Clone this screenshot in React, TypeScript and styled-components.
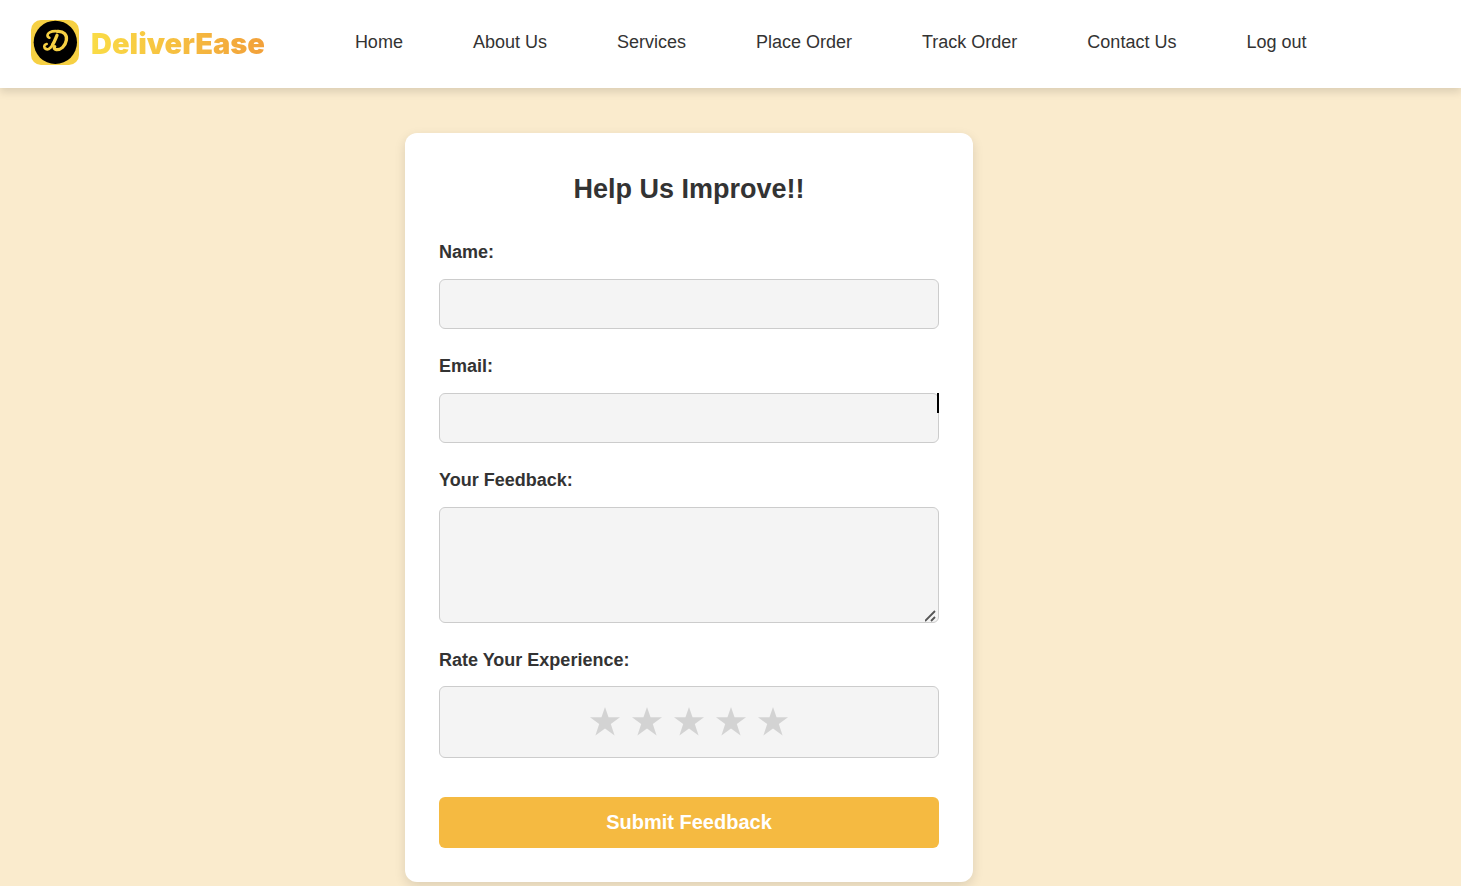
import React, { useState } from "react";
import styled, { createGlobalStyle } from "styled-components";

const GlobalStyle = createGlobalStyle`
  *, *::before, *::after { box-sizing: border-box; }
  body {
    margin: 0;
    background: #faebcd;
    color: #333;
    font-family: Arial, "Liberation Sans", sans-serif;
  }
`;

const Header = styled.header`
  display: flex;
  align-items: center;
  padding: 20px 31px 23px;
  background: #fff;
  box-shadow: 0 4px 8px rgba(0, 0, 0, 0.12);
`;

const Brand = styled.a`
  display: flex;
  align-items: center;
  gap: 12px;
  height: 45px;
  text-decoration: none;
`;

const BrandName = styled.span`
  padding-top: 2px;
  font: 900 29px/34px Inter, "Liberation Sans", sans-serif;
  background: linear-gradient(90deg, #fadc46, #f2a03a);
  background-clip: text;
  -webkit-background-clip: text;
  color: transparent;
`;

const Nav = styled.nav`
  display: flex;
  gap: 70px;
  margin-left: 90px;
  padding-bottom: 2px;
`;

const NavLink = styled.a`
  color: #333;
  font-size: 18px;
  line-height: 20px;
  text-decoration: none;
  white-space: nowrap;
`;

const Main = styled.main`
  display: flex;
  justify-content: center;
  padding: 45px 83px 4px 0;
`;

const Card = styled.form`
  width: 100%;
  max-width: 568px;
  padding: 34px;
  background: #fff;
  border-radius: 12px;
  box-shadow: 0 4px 12px rgba(0, 0, 0, 0.12);
`;

const Title = styled.h1`
  margin: 0 0 31px;
  font-size: 27px;
  line-height: 44px;
  text-align: center;
`;

const Field = styled.div`
  position: relative;
  display: flex;
  flex-direction: column;
  gap: 17px;
  margin-bottom: 27px;
`;

const Label = styled.label`
  font-size: 18px;
  font-weight: bold;
  line-height: 20px;
`;

const TextInput = styled.input`
  width: 100%;
  height: 50px;
  padding: 12px;
  border: 1px solid #ccc;
  border-radius: 6px;
  background: #f4f4f4;
  font: 18px/20px Arial, "Liberation Sans", sans-serif;
`;

const TextArea = styled.textarea`
  display: block;
  width: 100%;
  height: 116px;
  padding: 12px;
  border: 1px solid #ccc;
  border-radius: 6px;
  background: #f4f4f4;
  font: 18px/20px Arial, "Liberation Sans", sans-serif;
  resize: vertical;

  &::-webkit-resizer {
    background: transparent;
  }
`;

const Grip = styled.svg`
  position: absolute;
  right: 2px;
  bottom: 1px;
  pointer-events: none;
`;

const Caret = styled.span`
  position: absolute;
  right: 0;
  bottom: 30px;
  width: 2px;
  height: 20px;
  background: #000;
`;

const RatingGroup = styled.fieldset`
  min-width: 0;
  margin: 0 0 39px;
  padding: 0;
  border: 0;
`;

const Legend = styled.legend`
  padding: 0;
  margin-bottom: 16px;
  font-size: 18px;
  font-weight: bold;
  line-height: 20px;
`;

const Stars = styled.div`
  display: flex;
  align-items: center;
  justify-content: center;
  gap: 12px;
  height: 72px;
  border: 1px solid #ccc;
  border-radius: 6px;
  background: #f4f4f4;
`;

const StarLabel = styled.label<{ $on: boolean }>`
  position: relative;
  display: block;
  height: 30px;
  color: ${(p) => (p.$on ? "#f5ba41" : "#d3d3d3")};
  cursor: pointer;
`;

const StarInput = styled.input`
  position: absolute;
  inset: 0;
  width: 100%;
  height: 100%;
  margin: 0;
  opacity: 0;
  cursor: pointer;
`;

const SubmitButton = styled.button`
  display: block;
  width: 100%;
  height: 51px;
  padding: 0 0 2px;
  border: 0;
  border-radius: 6px;
  background: #f5ba41;
  color: #fff;
  font: bold 20px/24px Arial, "Liberation Sans", sans-serif;
  cursor: pointer;
`;

const Logo = () => (
  <svg width="48" height="45" viewBox="0 0 144 135" aria-hidden="true">
    <rect width="144" height="135" rx="30" fill="#f6d043" />
    <circle cx="73" cy="67" r="65" fill="#000" />
    <g fill="none" stroke="#f6d043" strokeLinecap="round" strokeLinejoin="round">
      <path strokeWidth="8" d="M55 53C47 50 48 41 56 37C64 33 74 33 82 34" />
      <path strokeWidth="10" d="M80 34C98 33 109 44 106 61C103 79 89 90 76 89C70 88 68 84 71 80" />
      <path strokeWidth="10" d="M78 46C74 55 71 64 65 74" />
      <path strokeWidth="8" d="M65 74C59 87 48 92 41 84C38 78 41 73 47 72" />
    </g>
  </svg>
);

const links = ["Home", "About Us", "Services", "Place Order", "Track Order", "Contact Us", "Log out"];

export default function App() {
  const [rating, setRating] = useState(0);
  return (
    <>
      <GlobalStyle />
      <Header>
        <Brand href="#">
          <Logo />
          <BrandName>DeliverEase</BrandName>
        </Brand>
        <Nav>
          {links.map((text) => (
            <NavLink key={text} href="#">{text}</NavLink>
          ))}
        </Nav>
      </Header>
      <Main>
        <Card onSubmit={(e) => e.preventDefault()}>
          <Title>Help Us Improve!!</Title>
          <Field>
            <Label htmlFor="name">Name:</Label>
            <TextInput id="name" type="text" />
          </Field>
          <Field>
            <Label htmlFor="email">Email:</Label>
            <TextInput id="email" type="email" />
            <Caret aria-hidden="true" />
          </Field>
          <Field>
            <Label htmlFor="feedback">Your Feedback:</Label>
            <TextArea id="feedback" />
            <Grip width="12" height="12" viewBox="0 0 12 12" fill="none" stroke="#555" strokeWidth="1.8" aria-hidden="true">
              <path d="M0 11L10 1M6 11L10 7" />
            </Grip>
          </Field>
          <RatingGroup>
            <Legend>Rate Your Experience:</Legend>
            <Stars>
              {[1, 2, 3, 4, 5].map((n) => (
                <StarLabel key={n} $on={n <= rating}>
                  <StarInput
                    type="radio"
                    name="rating"
                    value={n}
                    aria-label={`${n} of 5`}
                    checked={rating === n}
                    onChange={() => setRating(n)}
                  />
                  <svg width="30" height="29" viewBox="0 0 30 29" fill="currentColor" aria-hidden="true">
                    <path d="M15 0L18.5 10.3H30L20.8 17.1L24.6 28.6L15 21.6L5.4 28.6L9.2 17.1L0 10.3H11.5Z" />
                  </svg>
                </StarLabel>
              ))}
            </Stars>
          </RatingGroup>
          <SubmitButton type="submit">Submit Feedback</SubmitButton>
        </Card>
      </Main>
    </>
  );
}
